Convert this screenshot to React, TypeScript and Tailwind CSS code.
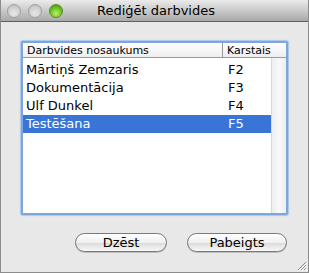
import React from "react";

const rows = [
  { name: "Mārtiņš Zemzaris", key: "F2" },
  { name: "Dokumentācija", key: "F3" },
  { name: "Ulf Dunkel", key: "F4" },
  { name: "Testēšana", key: "F5", selected: true },
];

function Light({ green }: { green?: boolean }) {
  return (
    <div
      className={
        green
          ? "w-[14px] h-[14px] rounded-full border border-[#5b8a2a] bg-[radial-gradient(circle_at_50%_70%,#b8f06a_0%,#6cc11e_55%,#3f8a0c_100%)]"
          : "w-[14px] h-[14px] rounded-full border border-[#a0a0a0] bg-[radial-gradient(circle_at_50%_70%,#e8e8e8_0%,#cfcfcf_60%,#b4b4b4_100%)]"
      }
    />
  );
}

export default function App() {
  return (
    <div
      className="w-[309px] h-[273px] flex flex-col bg-[#e8e8e8] border-x border-b border-[#8c8c8c] overflow-hidden relative"
      style={{ fontFamily: '"DejaVu Sans", "Liberation Sans", sans-serif' }}
    >
      <div className="h-[22px] shrink-0 relative flex items-center border-b border-[#5f5f5f] bg-[linear-gradient(#ebebeb,#cacaca_50%,#a9a9a9)]">
        <div className="flex gap-[7px] pl-[6px] pt-[1px]">
          <Light />
          <Light />
          <Light green />
        </div>
        <div className="absolute inset-0 flex items-center justify-center text-[13px] text-black pt-[1px] pl-[3px]">
          Rediģēt darbvides
        </div>
      </div>
      <div className="flex-1 flex flex-col px-[20px] pt-[19px]">
        <div className="h-[174px] rounded-[2px] border-[2px] border-[#7ea6dc] shadow-[0_0_1px_1px_#a9c6ec] bg-white flex flex-col">
          <div className="h-[15px] flex text-[11px] leading-[15px] border-b border-[#9a9a9a] bg-[linear-gradient(#ffffff,#eeeeee)]">
            <div className="w-[200px] pl-[4px] border-r border-[#9a9a9a]">Darbvides nosaukums</div>
            <div className="flex-1 pl-[4px]">Karstais</div>
          </div>
          <div className="flex-1 flex">
            <div className="flex-1 flex flex-col pt-[3px]">
              {rows.map((r) => (
                <div
                  key={r.name}
                  className={
                    "h-[18px] flex items-center text-[13px] " +
                    (r.selected ? "bg-[#3875d7] text-white" : "text-black")
                  }
                >
                  <div className="w-[200px] pl-[3px]">{r.name}</div>
                  <div className="pl-[5px]">{r.key}</div>
                </div>
              ))}
            </div>
            <div className="w-[15px] border-l border-[#d8d8d8] bg-[linear-gradient(90deg,#eeeeee,#f8f8f8_50%,#eeeeee)]" />
          </div>
        </div>
        <div className="flex justify-end gap-[20px] mt-[18px] pr-[1px]">
          <button className="w-[92px] h-[19px] rounded-full border border-[#7a7a7a] bg-[linear-gradient(#ffffff,#f0f0f0_50%,#dcdcdc_55%,#f8f8f8)] text-[13px] leading-[17px] text-black shadow-[0_1px_0_#c0c0c0]">
            Dzēst
          </button>
          <button className="w-[100px] h-[19px] rounded-full border border-[#7a7a7a] bg-[linear-gradient(#ffffff,#f0f0f0_50%,#dcdcdc_55%,#f8f8f8)] text-[13px] leading-[17px] text-black shadow-[0_1px_0_#c0c0c0]">
            Pabeigts
          </button>
        </div>
      </div>
      <svg className="absolute right-[1px] bottom-[1px]" width="11" height="11" viewBox="0 0 11 11">
        <path d="M10 2 L2 10 M10 5 L5 10 M10 8 L8 10" stroke="#8a8a8a" strokeWidth="1" />
        <path d="M11 3 L3 11 M11 6 L6 11 M11 9 L9 11" stroke="#ffffff" strokeWidth="1" />
      </svg>
    </div>
  );
}
